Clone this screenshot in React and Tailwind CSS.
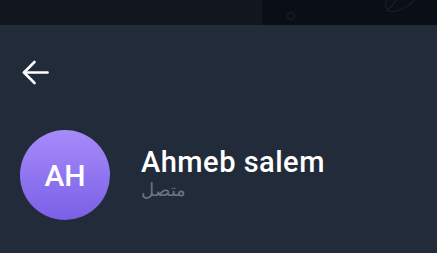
import React from "react";

function BackArrow() {
  return (
    <svg width="27" height="25" viewBox="0 0 27 25" fill="none" stroke="white" strokeWidth="2.6" strokeLinecap="round" strokeLinejoin="round">
      <path d="M25.5 12.5H2" />
      <path d="M12.5 2L2 12.5L12.5 23" />
    </svg>
  );
}

export default function App() {
  return (
    <div className="w-[437px] h-[253px] overflow-hidden bg-[#222b3a] font-['Roboto',_'Noto_Sans',_sans-serif]">
      <div className="h-[25px] flex">
        <div className="w-[262px] bg-[#12171e]" />
        <div className="flex-1 bg-[#0a0e15] relative">
          <div className="absolute left-[25px] top-[12px] w-[8px] h-[8px] rounded-full border border-[#1c222b]" />
          <svg className="absolute left-[110px] top-[-6px]" width="60" height="28" viewBox="0 0 60 28" fill="none" stroke="#1a2029" strokeWidth="1.2">
            <path d="M18 0 C10 10 14 20 24 17 C36 14 44 6 46 0" />
            <path d="M14 18 L30 0" />
          </svg>
        </div>
      </div>
      <div className="pl-[22px] pt-[35px] h-[84px]">
        <BackArrow />
      </div>
      <div className="flex items-center pl-[20px] mt-[21px] gap-[31px]">
        <div className="w-[90px] h-[90px] rounded-full bg-gradient-to-b from-[#a78bfa] to-[#7b5fe6] flex items-center justify-center text-white text-[30px] font-medium">
          AH
        </div>
        <div className="flex flex-col -mt-[5px]">
          <div className="text-white text-[29px] font-medium leading-[32px] tracking-[0.5px]">Ahmeb salem</div>
          <div className="text-[#6b7585] text-[18px] leading-[22px] font-['Noto_Sans',_sans-serif] self-start" dir="rtl">متصل</div>
        </div>
      </div>
    </div>
  );
}
